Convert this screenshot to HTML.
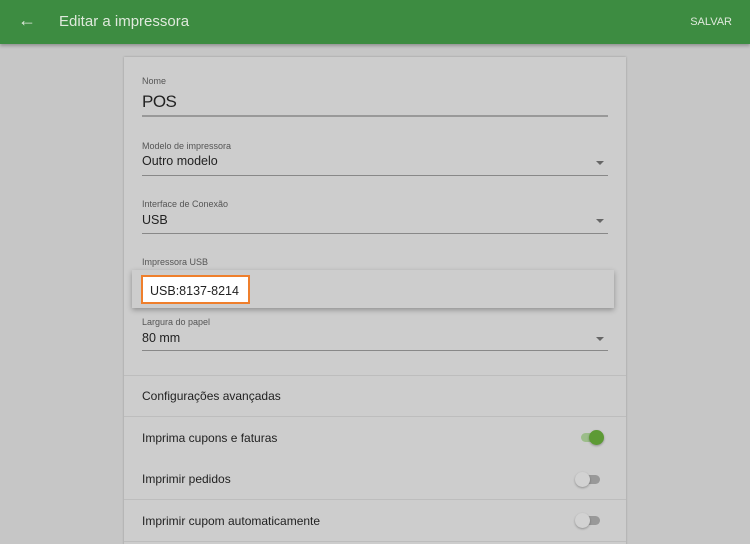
<!DOCTYPE html>
<html><head><meta charset="utf-8"><style>
*{margin:0;padding:0;box-sizing:border-box}
html,body{width:750px;height:544px;overflow:hidden}
body{background:#c6c6c6;font-family:"Liberation Sans",sans-serif;position:relative;color:#222}
.hdr{position:absolute;left:0;top:0;width:750px;height:44px;background:#3d8c41;box-shadow:0 2px 3px rgba(0,0,0,.25)}
.hdr .t{position:absolute;left:59px;top:13px;font-size:15px;color:#dfe9dc}
.hdr .s{position:absolute;right:18px;top:16px;font-size:11px;color:#dfe9dc}
.hdr .a{position:absolute;left:18px;top:10px;font-size:18px;color:#dfe9dc}
.card{position:absolute;left:124px;top:57px;width:502px;height:500px;background:#cdcdcd;box-shadow:0 0 2px rgba(0,0,0,.25)}
.abs{position:absolute}
.lab{position:absolute;left:18px;font-size:9px;color:#555}
.val{position:absolute;left:18px;font-size:12.5px;color:#222}
.line{position:absolute;left:18px;width:466px;height:1px;background:#888}
.arr{position:absolute;left:472px;width:0;height:0;border-left:4px solid transparent;border-right:4px solid transparent;border-top:4px solid #666}
.div{position:absolute;left:0;width:502px;height:1px;background:#bdbdbd}
.row{position:absolute;left:18px;font-size:12px;color:#222}
</style></head><body>
<div class="hdr"><div class="a">&#8592;</div><div class="t">Editar a impressora</div><div class="s">SALVAR</div></div>
<div class="card">
<div class="lab" style="top:19px">Nome</div>
<div class="val" style="top:35px;font-size:17px;letter-spacing:-0.5px">POS</div>
<div class="line" style="top:58px;height:2px;background:#999"></div>
<div class="lab" style="top:84px">Modelo de impressora</div>
<div class="val" style="top:97px">Outro modelo</div>
<div class="arr" style="top:104px"></div>
<div class="line" style="top:118px"></div>
<div class="lab" style="top:142px">Interface de Conexão</div>
<div class="val" style="top:156px">USB</div>
<div class="arr" style="top:162px"></div>
<div class="line" style="top:176px"></div>
<div class="lab" style="top:200px">Impressora USB</div>
<div class="lab" style="top:260px">Largura do papel</div>
<div class="val" style="top:274px">80 mm</div>
<div class="arr" style="top:280px"></div>
<div class="line" style="top:293px"></div>
<div class="div" style="top:318px"></div>
<div class="row" style="top:332px">Configurações avançadas</div>
<div class="div" style="top:359px"></div>
<div class="row" style="top:374px">Imprima cupons e faturas</div>
<div class="abs" style="left:457px;top:376px;width:20px;height:9px;border-radius:5px;background:#9cbd8a"></div>
<div class="abs" style="left:465px;top:373px;width:15px;height:15px;border-radius:50%;background:#5d9a35;box-shadow:0 1px 2px rgba(0,0,0,.3)"></div>
<div class="row" style="top:415px">Imprimir pedidos</div>
<div class="abs" style="left:456px;top:418px;width:20px;height:9px;border-radius:5px;background:#999"></div>
<div class="abs" style="left:451px;top:415px;width:15px;height:15px;border-radius:50%;background:#d2d2d2;box-shadow:0 1px 2px rgba(0,0,0,.3)"></div>
<div class="div" style="top:442px"></div>
<div class="row" style="top:457px">Imprimir cupom automaticamente</div>
<div class="abs" style="left:456px;top:459px;width:20px;height:9px;border-radius:5px;background:#999"></div>
<div class="abs" style="left:451px;top:456px;width:15px;height:15px;border-radius:50%;background:#d2d2d2;box-shadow:0 1px 2px rgba(0,0,0,.3)"></div>
<div class="div" style="top:484px"></div>
</div>
<div class="abs" style="left:132px;top:270px;width:482px;height:38px;background:#cdcdcd;box-shadow:0 2px 5px rgba(0,0,0,.3)"></div>
<div class="abs" style="left:141px;top:275px;width:109px;height:29px;background:#fff;border:2px solid #ef7f2c;font-size:12.5px;padding:7px 0 0 7px;color:#222">USB:8137-8214</div>
</body></html>
